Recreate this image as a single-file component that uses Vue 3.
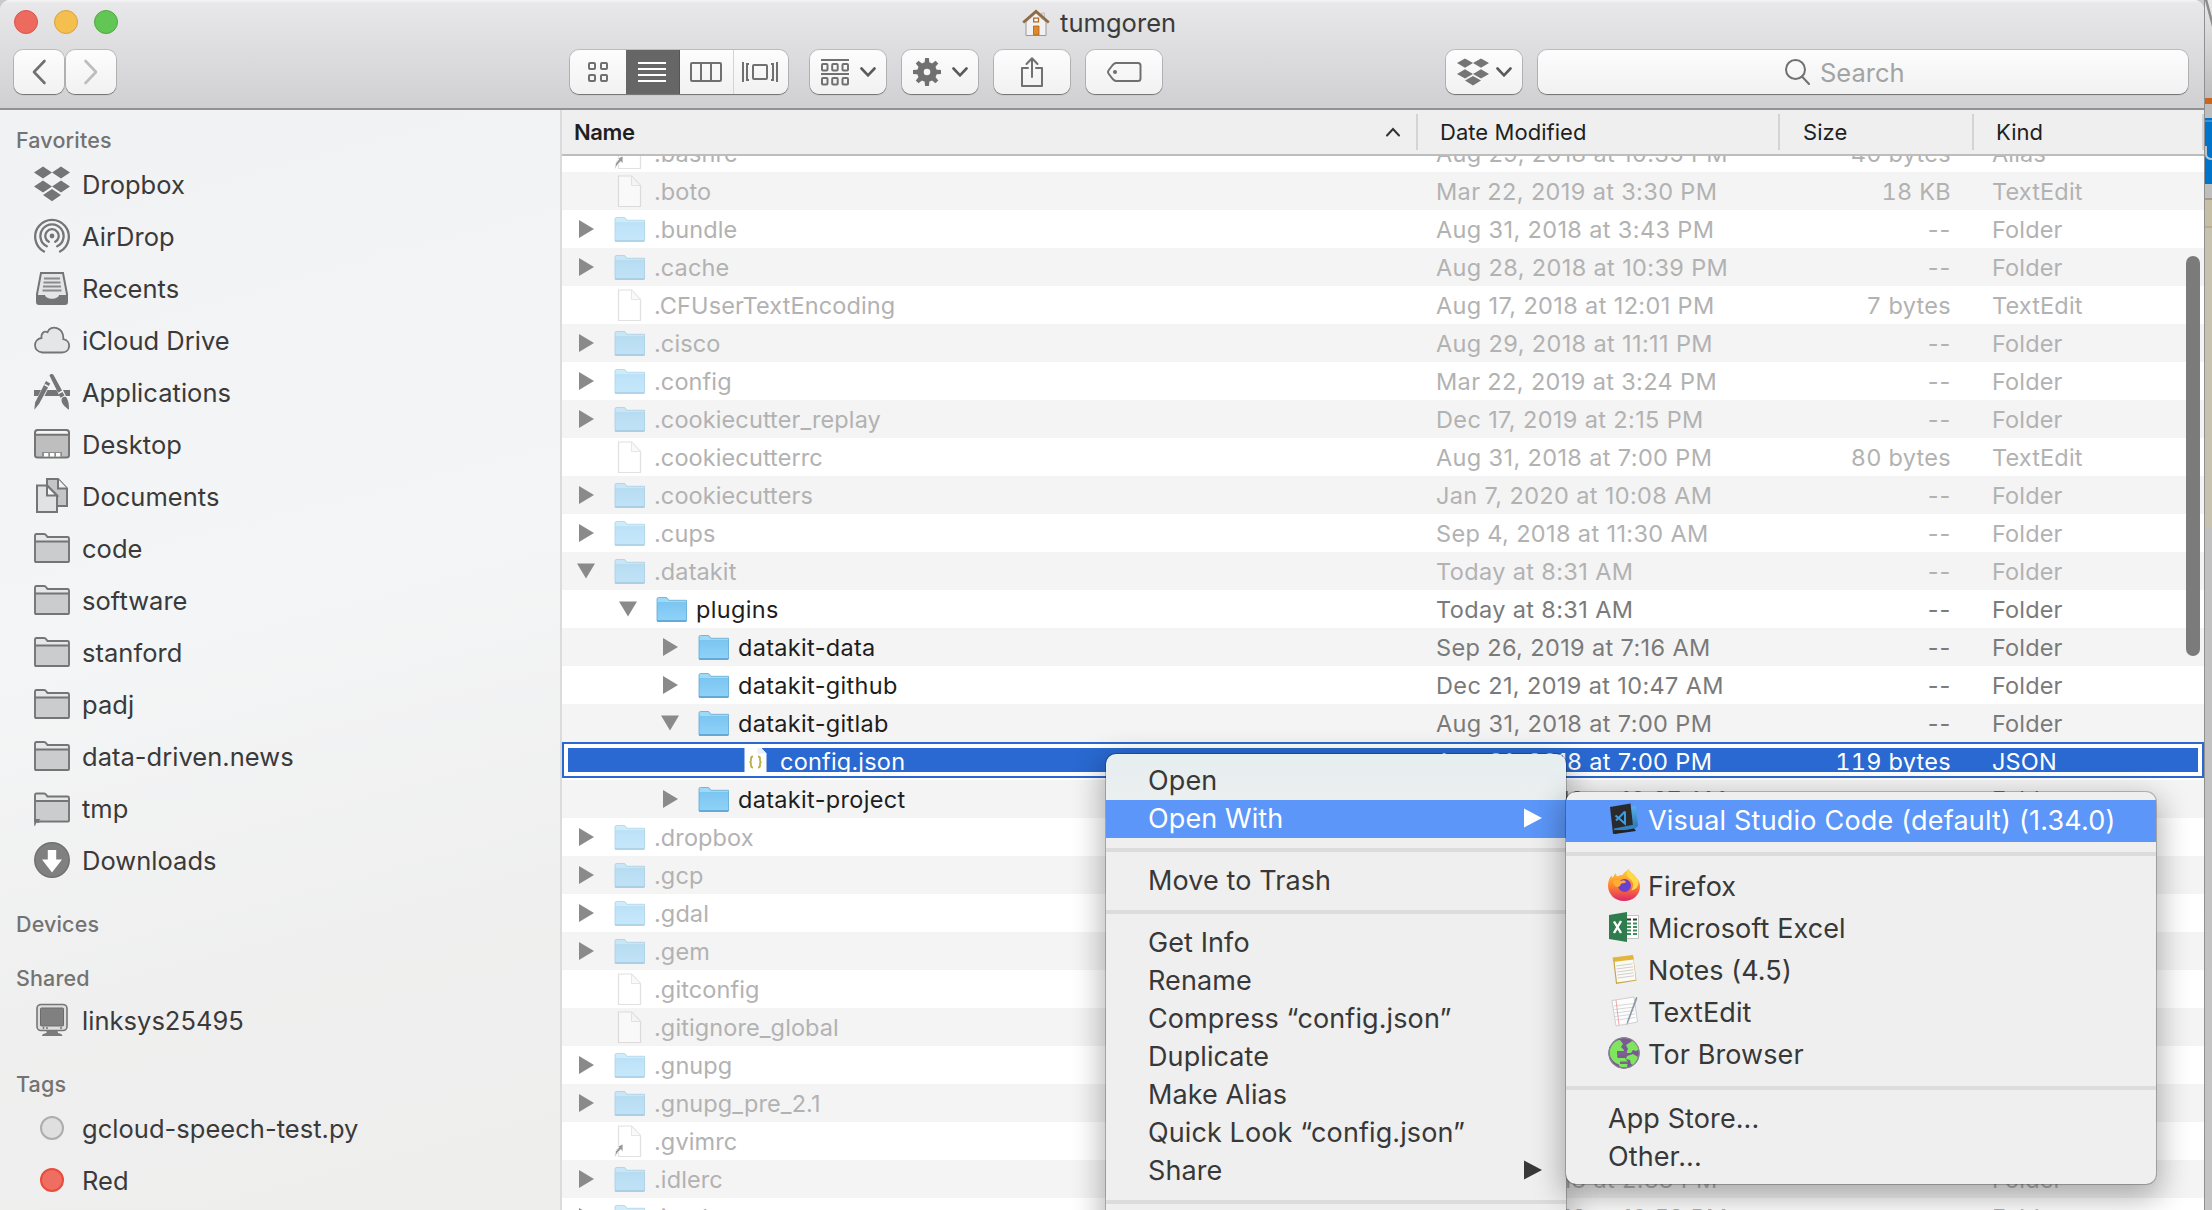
<script setup>
const favorites = [
  ['dropbox', 'Dropbox'], ['airdrop', 'AirDrop'], ['recents', 'Recents'], ['cloud', 'iCloud Drive'],
  ['apps', 'Applications'], ['desktop', 'Desktop'], ['documents', 'Documents'], ['sfolder', 'code'],
  ['sfolder', 'software'], ['sfolder', 'stanford'], ['sfolder', 'padj'], ['sfolder', 'data-driven.news'],
  ['salias', 'tmp'], ['downloads', 'Downloads'],
]

const row = (name, date, size = '--', kind = 'Folder', o = {}) => ({
  name, date, size, kind, level: 0, arrow: 'right', icon: 'folder', dim: true, ...o,
})
const file = { arrow: '', icon: 'file' }
const open = { dim: false }

const rows = [
  row('.bashrc', 'Aug 29, 2018 at 10:35 PM', '40 bytes', 'Alias', { arrow: '', icon: 'alias' }),
  row('.boto', 'Mar 22, 2019 at 3:30 PM', '18 KB', 'TextEdit', file),
  row('.bundle', 'Aug 31, 2018 at 3:43 PM'),
  row('.cache', 'Aug 28, 2018 at 10:39 PM'),
  row('.CFUserTextEncoding', 'Aug 17, 2018 at 12:01 PM', '7 bytes', 'TextEdit', file),
  row('.cisco', 'Aug 29, 2018 at 11:11 PM'),
  row('.config', 'Mar 22, 2019 at 3:24 PM'),
  row('.cookiecutter_replay', 'Dec 17, 2019 at 2:15 PM'),
  row('.cookiecutterrc', 'Aug 31, 2018 at 7:00 PM', '80 bytes', 'TextEdit', file),
  row('.cookiecutters', 'Jan 7, 2020 at 10:08 AM'),
  row('.cups', 'Sep 4, 2018 at 11:30 AM'),
  row('.datakit', 'Today at 8:31 AM', '--', 'Folder', { arrow: 'down' }),
  row('plugins', 'Today at 8:31 AM', '--', 'Folder', { ...open, level: 1, arrow: 'down' }),
  row('datakit-data', 'Sep 26, 2019 at 7:16 AM', '--', 'Folder', { ...open, level: 2 }),
  row('datakit-github', 'Dec 21, 2019 at 10:47 AM', '--', 'Folder', { ...open, level: 2 }),
  row('datakit-gitlab', 'Aug 31, 2018 at 7:00 PM', '--', 'Folder', { ...open, level: 2, arrow: 'down' }),
  row('config.json', 'Aug 31, 2018 at 7:00 PM', '119 bytes', 'JSON', { ...open, level: 3, arrow: '', icon: 'json', selected: true }),
  row('datakit-project', 'Sep 26, 2019 at 10:27 AM', '--', 'Folder', { ...open, level: 2 }),
  row('.dropbox', '', ''),
  row('.gcp', '', ''),
  row('.gdal', '', ''),
  row('.gem', '', ''),
  row('.gitconfig', '', '', '', file),
  row('.gitignore_global', '', '', '', file),
  row('.gnupg', '', ''),
  row('.gnupg_pre_2.1', '', ''),
  row('.gvimrc', '', '', '', { arrow: '', icon: 'alias' }),
  row('.idlerc', 'Aug 29, 2018 at 2:33 PM'),
  row('.ipython', 'Aug 28, 2018 at 10:52 PM'),
]

const menu = [
  { t: 'Open' }, { t: 'Open With', hi: true, sub: true }, null,
  { t: 'Move to Trash' }, null,
  { t: 'Get Info' }, { t: 'Rename' }, { t: 'Compress “config.json”' }, { t: 'Duplicate' },
  { t: 'Make Alias' }, { t: 'Quick Look “config.json”' }, { t: 'Share', sub: true }, null,
]
const apps = [
  { t: 'Visual Studio Code (default) (1.34.0)', i: 'vscode', hi: true }, null,
  { t: 'Firefox', i: 'firefox' }, { t: 'Microsoft Excel', i: 'excel' }, { t: 'Notes (4.5)', i: 'notes' },
  { t: 'TextEdit', i: 'textedit' }, { t: 'Tor Browser', i: 'tor' }, null,
  { t: 'App Store...' }, { t: 'Other...' },
]
</script>

<template>
  <div class="screen">
    <svg class="defs" width="0" height="0" aria-hidden="true">
      <defs>
        <linearGradient id="gf" x1="0" y1="0" x2="0" y2="1"><stop offset="0" stop-color="#7cc6f2" /><stop offset="1" stop-color="#8fd2f8" /></linearGradient>
        <linearGradient id="gx" x1="0" y1="0" x2="0" y2="1"><stop offset="0" stop-color="#ffd43c" /><stop offset=".5" stop-color="#ff8a2b" /><stop offset="1" stop-color="#e0246a" /></linearGradient>
        <linearGradient id="gv" x1="0" y1="0" x2="0" y2="1"><stop offset="0" stop-color="#57b4ee" /><stop offset="1" stop-color="#2b6fae" /></linearGradient>
      </defs>
      <symbol id="dropbox" viewBox="0 0 36 36"><path fill="#757575" d="M9 .5 18 6.500 9 12.500 0 6.500zM27 .5 36 6.500 27 12.500 18 6.500zM9 14.500 18 20.500 9 26.500 0 20.500zM27 14.500 36 20.500 27 26.500 18 20.500zM18 23 27 29 18 35.200 9 29z" /></symbol>
      <symbol id="airdrop" viewBox="0 0 36 36"><g fill="none" stroke="#757575" stroke-width="2.300" stroke-linecap="round"><path d="M10 33.500A16.800 16.800 0 1 1 26 33.500M12.800 28.300A11.600 11.600 0 1 1 23.200 28.300M14.800 23.800A6.700 6.700 0 1 1 21.200 23.800" /></g><circle cx="18" cy="18" r="2.400" fill="#757575" /></symbol>
      <symbol id="recents" viewBox="0 0 36 36"><path d="M7 3h22l4 21v8a2 2 0 0 1-2 2H5a2 2 0 0 1-2-2v-8z" fill="#e4e5e6" stroke="#757575" stroke-width="2" /><path d="M3 25h8c1 5 13 5 14 0h8v7a2 2 0 0 1-2 2H5a2 2 0 0 1-2-2z" fill="#757575" /><path d="M10 8.500h16M9.500 12.500h17M9 16.500h18M8.500 20.500h19" stroke="#8a8a8a" stroke-width="2" /></symbol>
      <symbol id="cloud" viewBox="0 0 36 36"><path d="M8.500 30.500H28C37 30.500 37.500 18.500 29.300 17.200 30 5 16.500 2 13.500 10.200 10 8.500 6.800 11.500 7.500 16 -1.500 17.500-1 30 8.500 30.500z" fill="#e4e6e7" stroke="#757575" stroke-width="1.800" /></symbol>
      <symbol id="apps" viewBox="0 0 36 36"><g fill="#757575"><path d="M0 16h7l-3 6H0zM13.500 16h9l3 6h-15zM29 16h7v6h-4z" /><path d="M15.500 1.500c1-2 3.400-1.800 4.200-.2L28 16.500l-4 2.300z" /><path d="m12 7 4.200 2.400L5 30 .3 35.800l.8-7.300z" /><path d="m24.500 20.200 4-2.300 2 3.600-4 2.300zM27.500 26c0-3 4-4.200 5.300-2 2 3.600 2.200 7 2.200 11.800-4-2.800-7.500-6-7.500-9.800z" /></g><path d="m10.500 10.500 5 2.800" stroke="#f2f3f4" stroke-width="1.500" /></symbol>
      <symbol id="desktop" viewBox="0 0 36 36"><rect x="1" y="4" width="34" height="27.500" rx="2.500" fill="#bebebe" /><path d="M2 8V6.500Q2 5 4 5h28q2 0 2 1.500V8z" fill="#f6f6f6" /><rect x="1" y="4" width="34" height="27.500" rx="2.500" fill="none" stroke="#757575" stroke-width="2" /><path d="M1 8.800h34" stroke="#757575" stroke-width="2" /><path d="M8 26h20v4.500H8z" fill="#8d8d8d" /><path d="M10 27h4.300v3.500H10zM16 27h4.300v3.500H16zM22 27h4.300v3.500H22z" fill="#fff" /></symbol>
      <symbol id="documents" viewBox="0 0 36 36"><path d="M13 1h11l9 9.500V28H13z" fill="#c4c5c6" stroke="#757575" stroke-width="2" /><path d="M24 1v9.500h9" fill="#f2f2f2" stroke="#757575" stroke-width="2" /><path d="M3 7.500h10l10 10V34H3z" fill="#e1e2e3" stroke="#757575" stroke-width="2" /><path d="M13 7.500v10h10z" fill="#f6f6f6" stroke="#757575" stroke-width="2" /></symbol>
      <symbol id="sfolder" viewBox="0 0 36 36"><path d="M1 31V5.500Q1 4 2.500 4H10q1.500 0 2.500 1.700L13.500 7H33.500q1.500 0 1.500 1.500V31q0 1-1 1H2q-1 0-1-1z" fill="#e6e7e8" /><path d="M2 12h32v19H2z" fill="#cbccce" /><path d="M1 31V5.500Q1 4 2.500 4H10q1.500 0 2.500 1.700L13.500 7H33.500q1.500 0 1.500 1.500V31q0 1-1 1H2q-1 0-1-1zM1 11.500h34" fill="none" stroke="#757575" stroke-width="1.900" /></symbol>
      <symbol id="salias" viewBox="0 0 36 36"><use href="#sfolder" y="-.5" /><path d="M0 29h6.500l-2 2 1 2-3-.4L1 36H.3z" fill="#757575" /></symbol>
      <symbol id="downloads" viewBox="0 0 36 36"><circle cx="18" cy="18" r="17.200" fill="#808080" stroke="#717171" stroke-width="1.500" /><path d="M13.800 8h8.400v9.500H28L18 30.500 8 17.500h5.800z" fill="#fff" /></symbol>
      <symbol id="monitor" viewBox="0 0 36 36"><rect x="3" y="2.500" width="30" height="26" rx="4" fill="#dedede" stroke="#757575" stroke-width="1.600" /><rect x="6.500" y="6" width="23" height="18" rx="1" fill="#808080" stroke="#6c6c6c" /><path d="M9.500 25v2M13 25v2M27 25v2" stroke="#757575" stroke-width="1.500" /><path d="M12.500 28.500h11L24 31q4 .5 4.500 3H8q0-2.500 4.500-3z" fill="#7b7b7b" /></symbol>
      <symbol id="folder" viewBox="0 0 32 26"><path d="M1 3Q1 1.500 2.500 1.500h7.500q1.300 0 2 1.500l.7 1.300H30.500V24.500q0 1-1 1H2q-1 0-1-1z" fill="#9ddafa" /><path d="M1 6.500h29.500V24.500q0 .7-1 .7H2q-1 0-1-.7z" fill="url(#gf)" /><path d="M1 24.500V3Q1 1.500 2.500 1.500h7.500q1.300 0 2 1.500l.7 1.300H30.500V24.500q0 .7-1 .7H2q-1 0-1-.7z" fill="none" stroke="#62a9d3" stroke-width=".8" /><path d="M1 6.500h29.500" stroke="#79c1ea" stroke-width=".8" /><path d="M1 25h29.500" stroke="#4f98c6" stroke-width="1.200" /></symbol>
      <symbol id="file" viewBox="0 0 32 34"><path d="M4.500 2h13l9 9.500v21h-22z" fill="#fff" stroke="#c4c4c4" stroke-width="1.200" /><path d="M17.500 2v9.500h9z" fill="#f4f4f4" stroke="#cfcfcf" stroke-width="1" /></symbol>
      <symbol id="alias" viewBox="0 0 32 34"><use href="#file" /><path d="M1 33q-1-6 4-10l-2.500-.3L9 20v8l-2-2.500Q3 28 1.500 33z" fill="#333" stroke="#fff" stroke-width=".8" /></symbol>
      <symbol id="json" viewBox="0 0 32 34"><path d="M4.500 1h13l9 9.500v22h-22z" fill="#fff" /><path d="M17.500 1v9.500h9z" fill="#e9eef8" /><path d="M13 13.500q-2 0-2 2v2q0 1.500-1.500 1.500 1.500 0 1.500 1.500v2q0 2 2 2M18 13.500q2 0 2 2v2q0 1.500 1.500 1.500-1.500 0-1.500 1.500v2q0 2-2 2" fill="none" stroke="#b9b04a" stroke-width="1.800" /></symbol>
      <symbol id="chev" viewBox="0 0 16 10"><path d="m1.500 1.500 6.500 6.800 6.500-6.800" fill="none" stroke="#5a5a5a" stroke-width="2.600" stroke-linecap="round" /></symbol>
      <symbol id="vscode" viewBox="0 0 32 32"><path d="m21 4 7-1 2 20-4 3z" fill="url(#gv)" /><path d="M2 4 22.500.5 25.500 27 5 31z" fill="#2a2a2c" /><path d="M6 25.500 29 21l-2.500 6L6 27z" fill="#2f82c4" /><path d="M6.500 29 26 25.500l2 2.500-21.500 3z" fill="#222" /><path d="M17 8.500v12L7.500 12.500M17 8.500 8 17.500" fill="none" stroke="#3f9be0" stroke-width="2" /></symbol>
      <symbol id="firefox" viewBox="0 0 32 32"><path d="M16 32C7 32 0 25.500 0 16.500 0 12 1.500 9 3.500 6.500l1 2.500L7.500 4l1.500 3.500Q12 5.500 14.500 6C16 3 19 2 20.500-.2 21.500 2.500 25.500 5 28 8.500q4 4 4 9C32 26 25 32 16 32z" fill="url(#gx)" /><circle cx="16.500" cy="16.500" r="6.500" fill="#6b3fd0" /><path d="M5 12q5-2 8 0 4-2 5 1.500l-5 1.200q-1 3.500-4 3.300Q5 16 5 12z" fill="#ffae35" /><path d="M20.500 0q-4 6 1 9.500 6 4 2 12 7-2 7-8-1-5-5-8.500Q21.500 3 20.500 0z" fill="#ffd84a" /></symbol>
      <symbol id="excel" viewBox="0 0 32 32"><path d="M17 4.500h13.500v23H17z" fill="#fff" stroke="#b5b5b5" stroke-width=".8" /><path d="M19 8.500h4M25 8.500h4" stroke="#333" stroke-width="2" /><path d="M19 12.500h4M25 12.500h4M19 16h4M25 16h4M19 19.500h4M25 19.500h4M19 23h4M25 23h4" stroke="#3f8c5c" stroke-width="1.800" /><path d="M1 4 19 1v30L1 28z" fill="#2f7d4f" /><path d="m6 10.500 7 11.500M13 10 6 22" stroke="#fff" stroke-width="2.400" /></symbol>
      <symbol id="notes" viewBox="0 0 32 32"><path d="M5 5 25 2.500 28.500 27.500 8 31z" fill="#c9a443" /><path d="M6.500 7.500 25.200 5.200 27.800 26.800 9 29.500z" fill="#fbfaf5" /><path d="M4.500 4.500 25 2l.7 4.500L5.200 9z" fill="#e2b63c" /><path d="m8 13 16.500-2.200M8.400 16 25 13.800M8.800 19l16.500-2.200M9.200 22l16.400-2.200M9.600 25l16.400-2.200" stroke="#cfcfcf" /></symbol>
      <symbol id="textedit" viewBox="0 0 32 32"><path d="M4 5.500 26 2l3.500 25L8 31z" fill="#fdfdfd" stroke="#c5c5c5" stroke-width=".8" /><path d="m6 11 20-2.500M6.300 14.500l20-2.500M6.700 18l20-2.500M7 21.500l20-2.500M7.500 25l20-2.500" stroke="#d5d8dc" /><path d="m8 5 3 25" stroke="#f0a5a5" /><path d="M28 2q2-.5 1 2.500L20.500 27l-2 3.500.5-4z" fill="#8d99a5" /></symbol>
      <symbol id="tor" viewBox="0 0 32 32"><circle cx="16" cy="16" r="15.700" fill="#7a5a93" /><path d="M4 8q4-5 8-5l3 4-2 3 3 3-1 3h-5l-1 4 4 3-1 5Q2 25 1.500 15q.5-4 2.500-7zM18 8l7-4.500q5 3 6 9l-3 1.500-3-1-2 3h-5l2-4zM19 19l6-2 5 3q-1 5-5 8l-2-1-1-4-4-1zM11 21h6l3 4-1 5q-5 1-8-1z" fill="#7fe45e" /><circle cx="16" cy="16" r="15.200" fill="none" stroke="#8a8593" /><path d="M9 14h10v4H9zM12 24.500h8v2.500h-8z" fill="#7d6096" /></symbol>
    </svg>

    <div class="window">
      <header class="chrome">
        <div class="titlebar">
          <div class="lights"><i class="red" /><i class="yellow" /><i class="green" /></div>
          <div class="title">
            <svg width="28" height="28" viewBox="0 0 28 28"><path d="M4 13v13.500h20V13L14 4z" fill="#f1f1f1" stroke="#999" /><path d="M19.500 4h3v6h-3z" fill="#ddd" stroke="#aaa" stroke-width=".6" /><path d="M1.200 13.500 14 2.200l12.800 11.300" fill="none" stroke="#8f6b43" stroke-width="2.600" /><path d="M11.500 17h5.500v9h-5.500z" fill="#e0882a" stroke="#a9621c" stroke-width=".8" /><path d="M11.700 9.200h4.800v3.600h-4.800z" fill="#fff" stroke="#b5651f" stroke-width="1.300" /></svg>
            <span>tumgoren</span>
          </div>
        </div>
        <div class="tools">
          <div class="nav">
            <button><svg width="16" height="26"><path d="M13.500 2 3 13l10.500 11" fill="none" stroke="#707070" stroke-width="2.600" stroke-linecap="round" stroke-linejoin="round" /></svg></button>
            <button><svg width="16" height="26"><path d="M2.500 2 13 13 2.500 24" fill="none" stroke="#bdbdbd" stroke-width="2.600" stroke-linecap="round" stroke-linejoin="round" /></svg></button>
          </div>
          <div class="views">
            <span><svg width="22" height="22" fill="none" stroke="#707070" stroke-width="2"><rect x="2" y="2" width="6" height="6" rx="1" /><rect x="14" y="2" width="6" height="6" rx="1" /><rect x="2" y="14" width="6" height="6" rx="1" /><rect x="14" y="14" width="6" height="6" rx="1" /></svg></span>
            <span class="on"><svg width="28" height="22" stroke="#fff" stroke-width="2"><path d="M0 2h28M0 8h28M0 14h28M0 20h28" /></svg></span>
            <span><svg width="32" height="22" fill="none" stroke="#707070" stroke-width="2"><rect x="1" y="2" width="30" height="18" rx="1" /><path d="M11 2v18M21 2v18" /></svg></span>
            <span class="last"><svg width="38" height="22" fill="none" stroke="#707070" stroke-width="2"><rect x="12" y="4" width="14" height="14" rx="1" /><path d="M2 1v20M36 1v20M8 3H6v16h2M30 3h2v16h-2" /></svg></span>
          </div>
          <button class="b arrange"><svg width="28" height="28" fill="none" stroke="#707070" stroke-width="2"><path d="M0 2h28M0 16h28" /><g><rect x="1" y="6" width="5.500" height="6.500" rx="1" /><rect x="11.200" y="6" width="5.500" height="6.500" rx="1" /><rect x="21.500" y="6" width="5.500" height="6.500" rx="1" /><rect x="1" y="20" width="5.500" height="6.500" rx="1" /><rect x="11.200" y="20" width="5.500" height="6.500" rx="1" /><rect x="21.500" y="20" width="5.500" height="6.500" rx="1" /></g></svg><svg width="16" height="10"><use href="#chev" /></svg></button>
          <button class="b gear"><svg width="28" height="28" viewBox="-14 -14 28 28"><g fill="#707070"><path v-for="a in 8" :key="a" :transform="`rotate(${a * 45})`" d="M-2.600 -7.500-1.900-14h3.800L2.600-7.500z" /></g><circle r="6.600" fill="none" stroke="#707070" stroke-width="6.600" /></svg><svg width="16" height="10"><use href="#chev" /></svg></button>
          <button class="b"><svg width="24" height="32" fill="none" stroke="#707070" stroke-width="2"><path d="M8 12H2v18h20V12h-6M12 21V3M6.500 8 12 2.300 17.500 8" stroke-linecap="round" stroke-linejoin="round" /></svg></button>
          <button class="b"><svg width="36" height="22" fill="none" stroke="#707070" stroke-width="2"><path d="M10 2h22q2.500 0 2.500 2.500v13q0 2.500-2.500 2.500H10Q8 20 5.500 16.500L2.500 12.500Q1.500 11 2.500 9.500L5.500 5.500Q8 2 10 2z" /><circle cx="9" cy="11" r="2" fill="#707070" stroke="none" /></svg></button>
          <button class="b drop"><svg width="32" height="28" viewBox="0 0 36 36" preserveAspectRatio="none"><use href="#dropbox" /></svg><svg width="16" height="10"><use href="#chev" /></svg></button>
          <div class="search"><svg width="28" height="28" fill="none" stroke="#707070" stroke-width="2"><circle cx="11.500" cy="11.500" r="9.500" /><path d="m18 18.500 7 7.500" stroke-linecap="round" /></svg><span>Search</span></div>
        </div>
      </header>

      <div class="body">
        <aside class="sidebar">
          <h3>Favorites</h3>
          <div v-for="f in favorites" :key="f[1]" class="item"><svg width="36" height="36"><use :href="'#' + f[0]" /></svg><span>{{ f[1] }}</span></div>
          <h3 class="gap">Devices</h3>
          <h3 class="gap shared">Shared</h3>
          <div class="item"><svg width="36" height="36"><use href="#monitor" /></svg><span>linksys25495</span></div>
          <h3 class="gap">Tags</h3>
          <div class="item"><i class="tag" /><span>gcloud-speech-test.py</span></div>
          <div class="item"><i class="tag hot" /><span>Red</span></div>
        </aside>

        <section class="list">
          <div class="head">
            <div class="c-name"><b>Name</b><svg width="16" height="10"><path d="m2 8.500 6-6.500 6 6.500" fill="none" stroke="#333" stroke-width="2" stroke-linecap="round" /></svg></div>
            <div class="c-date">Date Modified</div>
            <div class="c-size">Size</div>
            <div class="c-kind">Kind</div>
          </div>
          <div class="rows">
            <div v-for="r in rows" :key="r.name" class="row" :class="{ dim: r.dim, sel: r.selected }">
              <div class="cells">
                <div class="n-name" :style="{ paddingLeft: r.level * 42 + 'px' }">
                  <span class="tri"><svg v-if="r.arrow === 'right'" width="16" height="18"><path d="M1 0v18L16 9z" fill="#8a8a8a" /></svg><svg v-else-if="r.arrow" class="down" width="18" height="16"><path d="M0 .5h18L9 15.500z" fill="#8a8a8a" /></svg></span>
                  <svg class="ico" width="32" :height="r.icon === 'folder' ? 26 : 34"><use :href="'#' + r.icon" /></svg>
                  <span class="nm">{{ r.name }}</span>
                </div>
                <div class="n-date">{{ r.date }}</div>
                <div class="n-size" :class="{ none: r.size === '--' }">{{ r.size }}</div>
                <div class="n-kind">{{ r.kind }}</div>
              </div>
            </div>
          </div>
          <div class="thumb" />
        </section>
      </div>
    </div>

    <div class="behind">
      <svg class="sliver" width="7" height="98"><path d="M0-4 8 26" stroke="#8c8c8c" stroke-width="2.500" /></svg>
      <i class="orange" />
      <svg class="blue" width="7" height="66"><path d="M0 0h7v66H0z" fill="#0074cb" /><path d="M0 3h7" stroke="#4d9ede" stroke-width="1.500" /><path d="M1 28v8q0 5 6 5" fill="none" stroke="#b9c6d2" stroke-width="2" /></svg>
      <i class="sand" />
    </div>

    <div class="menu main">
      <template v-for="(m, k) in menu" :key="k">
        <hr v-if="!m">
        <div v-else class="mi" :class="{ hi: m.hi }"><span>{{ m.t }}</span><svg v-if="m.sub" width="18" height="20"><path d="M0 .5v19L18 10z" fill="currentColor" /></svg></div>
      </template>
    </div>
    <div class="menu sub">
      <template v-for="(m, k) in apps" :key="k">
        <hr v-if="!m">
        <div v-else class="mi" :class="{ hi: m.hi, tall: m.i }"><svg v-if="m.i" class="app" width="32" height="32"><use :href="'#' + m.i" /></svg><span>{{ m.t }}</span></div>
      </template>
    </div>
  </div>
</template>

<style>
body { margin: 0; overflow: hidden; }
</style>

<style scoped>
.screen { position: relative; width: 2212px; height: 1210px; overflow: hidden; display: flex; background: #c9c9c9; font-family: Inter, "Liberation Sans", sans-serif; white-space: nowrap; color: #3c3c3c; }
.screen * { box-sizing: border-box; }
.defs { position: absolute; }
svg { display: block; flex: none; overflow: visible; }
.window { width: 2204px; height: 1210px; display: flex; flex-direction: column; overflow: hidden; border-radius: 10px 10px 0 0; background: #fff; }
.chrome { height: 110px; background: linear-gradient(#f6f6f6 0, #e8e7e9 3px, #d0cfd1 108px); border-bottom: 2px solid #929292; flex: none; }
.titlebar { height: 50px; display: flex; }
.lights { display: flex; gap: 16px; padding: 10px 0 0 14px; width: 1022px; }
.lights i { width: 24px; height: 24px; border-radius: 50%; border: 1px solid #d9544a; background: #ed6a5f; }
.lights .yellow { background: #f5bf4f; border-color: #d9a13c; }
.lights .green { background: #62c655; border-color: #51a73e; }
.title { display: flex; gap: 10px; padding-top: 9px; font-size: 25.5px; line-height: 27px; letter-spacing: .05px; color: #3b3b3b; }
.tools { display: flex; padding-left: 14px; height: 44px; }
button, .views, .search { height: 44px; border: 0; padding: 0; border-radius: 9px; background: linear-gradient(#fdfdfd, #f1f1f1); box-shadow: 0 0 0 1px #00000026, 0 1px 1px #0000005c; display: flex; align-items: center; justify-content: center; }
.nav { display: flex; gap: 2px; width: 556px; }
.nav button { width: 50px; padding-right: 1px; }
.views { width: 218px; overflow: hidden; margin-right: 22px; justify-content: flex-start; }
.views span { width: 54px; height: 44px; display: flex; align-items: center; justify-content: center; border-right: 1px solid #d4d4d4; padding-right: 2px; }
.views span:first-child { width: 56px; border: 0; padding: 0; }
.views .on { background: #666; border-color: #555; }
.views .last { border: 0; }
.b { width: 76px; margin-right: 16px; gap: 11px; }
.drop { margin-left: 268px; gap: 7px; }
.search { width: 650px; gap: 8px; font-size: 25.5px; letter-spacing: 0; color: #a3a3a3; justify-content: flex-start; padding-left: 246px; }
.search span { padding-top: 1px; }
.body { display: flex; flex: 1; min-height: 0; }
.sidebar { width: 562px; border-right: 2px solid #dadbdc; padding-top: 12px; background: linear-gradient(165deg, #f1f2f4 0, #f4f5f6 45%, #efefef 75%, #eeeeed); overflow: hidden; flex: none; }
h3 { margin: 0; padding-left: 16px; height: 36px; font-size: 21.5px; line-height: 37px; font-weight: 500; color: #737373; letter-spacing: .15px; }
h3.gap { margin-top: 20px; }
h3.shared { margin-top: 18px; height: 34px; }
.item { height: 52px; padding-left: 34px; display: flex; align-items: center; font-size: 25.5px; letter-spacing: .03px; color: #3a3a3a; gap: 12px; }
.tag { width: 24px; height: 24px; margin: 0 6px; border-radius: 50%; background: #dfdfdf; border: 2px solid #adadad; }
.tag.hot { background: #ee6e62; border-color: #ea4b3c; }
.list { flex: 1; display: flex; flex-direction: column; position: relative; min-width: 0; }
.head { height: 46px; flex: none; background: #efefef; border-bottom: 2px solid #bdbdbd; display: flex; align-items: center; font-size: 22px; color: #1f1f1f; letter-spacing: .05px; }
.head > div { height: 36px; display: flex; align-items: center; border-right: 2px solid #d4d4d4; }
.head b { font-weight: 600; letter-spacing: -.4px; }
.c-name { width: 856px; padding: 0 15px 0 12px; justify-content: space-between; }
.c-date { width: 362px; padding-left: 22px; }
.c-size { width: 194px; padding-left: 23px; }
.c-kind { width: 230px; padding-left: 22px; }
.rows { flex: 1; overflow: hidden; }
.row { height: 38px; background: #fff; color: #1d1d1d; }
.row:first-child { margin-top: -22px; }
.row:nth-child(even) { background: #f4f4f4; }
.cells { height: 38px; display: flex; align-items: center; font-size: 23.5px; letter-spacing: .1px; line-height: 39px; }
.n-name { width: 874px; display: flex; align-items: center; height: 38px; }
.row:not(.dim) .nm { letter-spacing: .32px; }
.tri { width: 52px; padding-left: 16px; }
.tri .down { margin-left: -1px; }
.ico { margin-right: 8px; }
.n-date { width: 314px; color: #7a7a7a; letter-spacing: .37px; }
.n-size { width: 201px; text-align: right; color: #7a7a7a; font-variant-numeric: tabular-nums; letter-spacing: .3px; }
.n-size.none { font-variant-numeric: normal; letter-spacing: .8px; }
.n-kind { padding-left: 41px; color: #7a7a7a; letter-spacing: .15px; }
.dim .nm, .dim .n-date, .dim .n-size, .dim .n-kind { color: #b2b2b2; }
.dim .ico { opacity: .5; }
.row.sel { background: #fff; padding-bottom: 2px; }
.sel .cells { height: 36px; border: 2px solid #2969d1; padding: 4px; background: #2969d1 content-box; overflow: hidden; }
.sel .n-name { width: 868px; height: 24px; overflow: hidden; }
.sel .tri { width: 46px; }
.row.sel .nm { letter-spacing: .2px; }
.sel .nm, .sel .n-date, .sel .n-size, .sel .n-kind { color: #fff; height: 24px; line-height: 27px; overflow: hidden; }
.thumb { position: absolute; right: 4px; top: 146px; width: 14px; height: 400px; border-radius: 7px; background: #7b7b7b; }
.behind { width: 8px; border-left: 1px solid #909090; background: linear-gradient(#e8e8e8, #bdbdbd 96px, #c4c4c4); display: flex; flex-direction: column; }
.sliver { overflow: hidden; }
.orange { height: 6px; background: #cb641d; }
.blue { margin-top: 14px; }
.sand { height: 330px; margin-top: 14px; background: linear-gradient(#a09c87 2px, #c6bfa5 2px, #c6bfa5 28px, #bcae88 28px, #bcae88 30px, #c7c2b0 30px); }
.menu { position: absolute; background: #efefef; box-shadow: 0 0 0 1px #00000038, 0 10px 30px 4px #0000004d; font-size: 27px; letter-spacing: .1px; color: #383838; }
.main { left: 1106px; top: 754px; width: 460px; height: 500px; border-radius: 10px; padding-top: 8px; background: linear-gradient(#e6eeef, #ebefef 46px, #efefef 50px); }
.sub { left: 1566px; top: 792px; width: 590px; height: 392px; border-radius: 10px; padding-top: 8px; }
.mi { height: 38px; display: flex; align-items: center; justify-content: space-between; padding: 0 24px 2px 42px; }
.mi.hi { background: #5b96f8; color: #fff; }
.tall { height: 42px; justify-content: flex-start; gap: 8px; }
.sub .hi { letter-spacing: .2px; }
.app { margin-top: -3px; }
hr { margin: 10px 0; height: 4px; border: 0; background: #dcdcdc; }
</style>
